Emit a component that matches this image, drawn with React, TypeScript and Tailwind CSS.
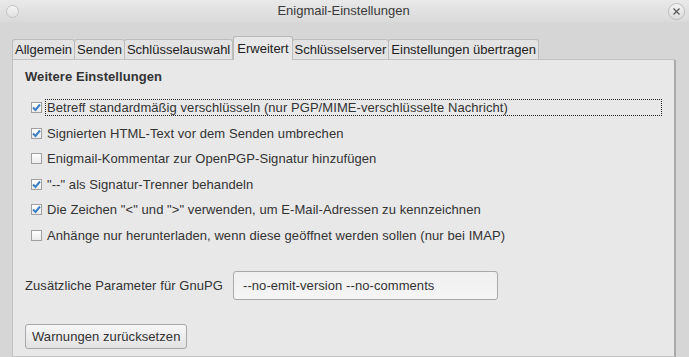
import React from 'react';

const tabs = ['Allgemein', 'Senden', 'Schlüsselauswahl', 'Erweitert', 'Schlüsselserver', 'Einstellungen übertragen'];

const options: { label: string; checked: boolean }[] = [
  { label: 'Betreff standardmäßig verschlüsseln (nur PGP/MIME-verschlüsselte Nachricht)', checked: true },
  { label: 'Signierten HTML-Text vor dem Senden umbrechen', checked: true },
  { label: 'Enigmail-Kommentar zur OpenPGP-Signatur hinzufügen', checked: false },
  { label: '"--" als Signatur-Trenner behandeln', checked: true },
  { label: 'Die Zeichen "<" und ">" verwenden, um E-Mail-Adressen zu kennzeichnen', checked: true },
  { label: 'Anhänge nur herunterladen, wenn diese geöffnet werden sollen (nur bei IMAP)', checked: false },
];

function Box({ checked }: { checked: boolean }) {
  return (
    <span className="w-[11px] h-[11px] border border-[#a0a0a0] bg-gradient-to-b from-white to-[#ececec] flex items-center justify-center shrink-0">
      {checked && (
        <svg width="9" height="9" viewBox="0 0 9 9">
          <path d="M1 4.5 L3.5 7 L8 1.5" fill="none" stroke="#3d7fc4" strokeWidth="2" />
        </svg>
      )}
    </span>
  );
}

export default function App() {
  return (
    <div className="w-[689px] h-[357px] overflow-hidden bg-[#d6d6d6] text-[13px] text-[#333] font-['Liberation_Sans',Arial,sans-serif] flex flex-col">
      {/* title bar */}
      <div className="h-[22px] bg-gradient-to-b from-[#e9e9e9] to-[#dadada] flex items-center justify-between px-[6px] shrink-0">
        <span className="w-[13px] h-[13px] rounded-full border border-[#c4c4c4] bg-gradient-to-b from-[#f4f4f4] to-[#e0e0e0]" />
        <span className="text-[#3a3a3a] text-[13px]">Enigmail-Einstellungen</span>
        <span className="w-[17px] h-[17px] rounded-full border border-[#bdbdbd] bg-gradient-to-b from-[#f2f2f2] to-[#dedede] flex items-center justify-center mr-[-2px] mt-[1px]">
          <svg width="7" height="7" viewBox="0 0 7 7">
            <path d="M0.5 0.5 L6.5 6.5 M6.5 0.5 L0.5 6.5" stroke="#555" strokeWidth="1.2" />
          </svg>
        </span>
      </div>

      <div className="flex-1 px-[12px] pt-[14px] flex flex-col">
        {/* tabs */}
        <div className="flex items-end h-[23px] relative z-10">
          {tabs.map((t) => {
            const sel = t === 'Erweitert';
            return (
              <div
                key={t}
                className={
                  sel
                    ? 'h-[24px] -mb-[1px] px-[3px] border border-b-0 border-[#b8b8b8] rounded-t-[3px] bg-[#e8e8e8] flex items-center text-[#222]'
                    : 'h-[20px] px-[2px] border border-b-0 border-[#bdbdbd] rounded-t-[3px] bg-[#e3e3e3] flex items-center -ml-px first:ml-0 text-[#222]'
                }
              >
                {t}
              </div>
            );
          })}
        </div>

        {/* panel */}
        <div className="flex-1 w-[664px] bg-[#e8e8e8] border border-[#c2c2c2] border-r-2 border-r-[#a9a9a9] rounded-tr-[3px] px-[12px] pt-[8px] tracking-[0.07px]">
          <div className="font-bold text-[13px] h-[18px] flex items-center">Weitere Einstellungen</div>

          <div className="mt-[9px] flex flex-col">
            {options.map((o, i) => (
              <div key={o.label} className="h-[25.5px] flex items-center pl-[6px]">
                <Box checked={o.checked} />
                <span
                  className={
                    i === 0
                      ? 'ml-[3px] pl-[1px] w-[618px] h-[17px] flex items-center border border-dotted border-[#222]'
                      : 'ml-[5px]'
                  }
                >
                  {o.label}
                </span>
              </div>
            ))}
          </div>

          <div className="mt-[23px] flex items-center">
            <span>Zusätzliche Parameter für GnuPG</span>
            <div className="ml-[10px] w-[265px] h-[29px] rounded-[3px] border border-[#a8a8a8] bg-gradient-to-b from-[#f0f0f0] to-[#f5f5f5] flex items-center pl-[9px] text-[#333]">
              --no-emit-version --no-comments
            </div>
          </div>

          <div className="mt-[24px]">
            <button className="h-[25px] px-[6px] rounded-[3px] border border-[#a8a8a8] bg-gradient-to-b from-[#f7f7f7] to-[#e2e2e2] text-[#333] text-[13px] tracking-[0.07px]">
              Warnungen zurücksetzen
            </button>
          </div>
        </div>
      </div>
    </div>
  );
}
